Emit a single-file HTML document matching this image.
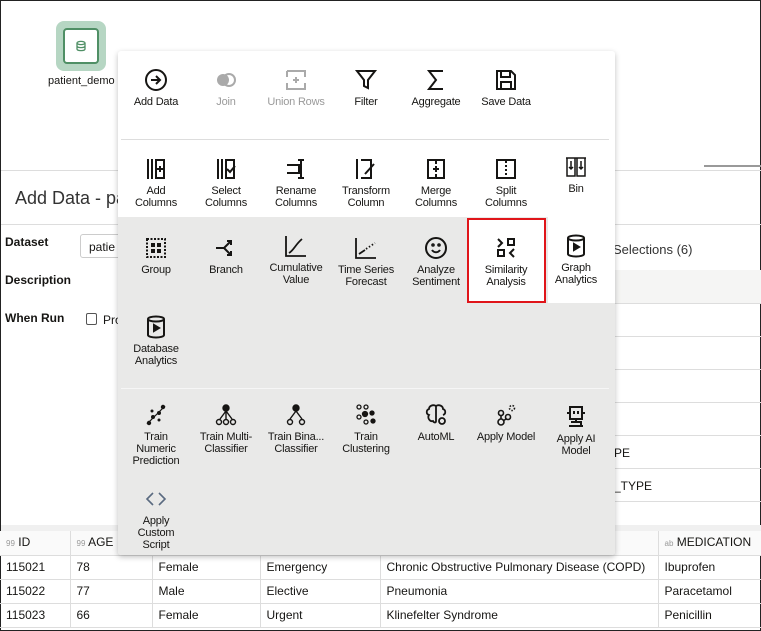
<!DOCTYPE html>
<html><head><meta charset="utf-8"><style>
*{box-sizing:border-box;margin:0;padding:0}
body{width:761px;height:631px;overflow:hidden;background:#fff;font-family:"Liberation Sans",sans-serif;color:#161513;position:relative;border:1px solid #222}
.abs{position:absolute}
.menu{position:absolute;left:117px;top:50px;width:497px;height:504px;background:#fff;box-shadow:0 2px 6px rgba(0,0,0,.25);border-radius:3px;overflow:hidden}
.gray{position:absolute;left:0;top:166px;width:497px;height:338px;background:#e9e9e8}
.it{position:absolute;width:70px;text-align:center;font-size:11px;line-height:12px;color:#161513;letter-spacing:-0.2px}
.it svg{display:block;margin:0 auto 4px;width:24px;height:24px}
.dis{color:#9a9a9a}
.sep{position:absolute;left:3px;width:488px;height:1px;background:#ddd}
table{border-collapse:collapse;table-layout:fixed}
td{border-right:1px solid #ddd;border-bottom:1px solid #ddd;padding:0 0 0 6px;font-size:12px;height:24px;line-height:14px;overflow:hidden;white-space:nowrap}
</style></head><body>
<div class="abs" style="left:55px;top:20px;width:50px;height:50px;background:#b6d6c3;border-radius:8px"><div style="position:absolute;left:7px;top:7px;width:36px;height:36px;border:2px solid #4f8f65;border-radius:4px;background:#fff"></div><svg class="abs" style="left:19px;top:19px" width="12" height="12" viewBox="0 0 12 12" fill="none" stroke="#4f8f65" stroke-width="1.3"><ellipse cx="6" cy="3" rx="4" ry="1.6"/><path d="M2 3v6c0 1 2 1.6 4 1.6s4-.6 4-1.6V3M2 6c0 1 2 1.6 4 1.6s4-.6 4-1.6"/></svg></div>
<div class="abs" style="left:47px;top:74px;font-size:11px">patient_demo</div>
<div class="abs" style="left:703px;top:164px;width:58px;height:2px;background:#999"></div>
<div class="abs" style="left:0;top:169px;width:761px;height:1px;background:#ddd"></div>
<div class="abs" style="left:14px;top:187px;font-size:18px;color:#333">Add Data - pa</div>
<div class="abs" style="left:0;top:223px;width:761px;height:1px;background:#ddd"></div>
<div class="abs" style="left:4px;top:234px;font-size:12px;font-weight:bold">Dataset</div>
<div class="abs" style="left:79px;top:233px;width:50px;height:24px;border:1px solid #ccc;border-radius:3px;font-size:12px;padding:5px 0 0 8px">patie</div>
<div class="abs" style="left:4px;top:272px;font-size:12px;font-weight:bold">Description</div>
<div class="abs" style="left:4px;top:310px;font-size:12px;font-weight:bold">When Run</div>
<div class="abs" style="left:85px;top:312px;width:11px;height:12px;border:1px solid #555;border-radius:2px"></div>
<div class="abs" style="left:102px;top:312px;font-size:12px">Pro</div>
<div class="abs" style="left:612px;top:241px;font-size:13px;color:#333">Selections (6)</div>
<div class="abs" style="left:612px;top:269px;width:149px;height:33px;background:#f5f5f4"></div>
<div class="abs" style="left:612px;top:302px;width:149px;height:1px;background:#ddd"></div>
<div class="abs" style="left:612px;top:335px;width:149px;height:1px;background:#ddd"></div>
<div class="abs" style="left:612px;top:368px;width:149px;height:1px;background:#ddd"></div>
<div class="abs" style="left:612px;top:401px;width:149px;height:1px;background:#ddd"></div>
<div class="abs" style="left:612px;top:434px;width:149px;height:1px;background:#ddd"></div>
<div class="abs" style="left:612px;top:467px;width:149px;height:1px;background:#ddd"></div>
<div class="abs" style="left:612px;top:500px;width:149px;height:1px;background:#ddd"></div>
<div class="abs" style="left:613px;top:445px;font-size:12px">PE</div>
<div class="abs" style="left:613px;top:478px;font-size:12px">_TYPE</div>
<div class="abs" style="left:0;top:524px;width:761px;height:6px;background:#f0f0f0"></div>
<table class="abs" style="left:-1px;top:530px;width:762px">
<colgroup><col style="width:70px"><col style="width:82px"><col style="width:108px"><col style="width:120px"><col style="width:278px"><col></colgroup>
<tr style="background:#fafafa"><td style="height:21px"><span style="font-size:8px;color:#999">99</span> ID</td><td><span style="font-size:8px;color:#999">99</span> AGE</td><td></td><td></td><td></td><td><span style="font-size:8px;color:#999">ab</span> MEDICATION</td></tr>
<tr><td>115021</td><td>78</td><td>Female</td><td>Emergency</td><td>Chronic Obstructive Pulmonary Disease (COPD)</td><td>Ibuprofen</td></tr>
<tr><td>115022</td><td>77</td><td>Male</td><td>Elective</td><td>Pneumonia</td><td>Paracetamol</td></tr>
<tr><td>115023</td><td>66</td><td>Female</td><td>Urgent</td><td>Klinefelter Syndrome</td><td>Penicillin</td></tr>
</table>

<div class="menu">
<div class="gray"></div>
<div class="abs" style="left:430px;top:166px;width:67px;height:86px;background:#fff"></div>
<div class="abs" style="left:349px;top:167px;width:79px;height:85px;background:#fff;border:2px solid #e0151a"></div>
<div class="sep" style="top:88px"></div>
<div class="sep" style="top:337px;background:#f6f6f6"></div>

<div class="it" style="left:3px;top:17px"><svg viewBox="0 0 24 24" fill="none" stroke="#161513" stroke-width="2"><circle cx="12" cy="12" r="10"/><path d="M7 12h9M12 8l4 4-4 4"/></svg>Add Data</div>
<div class="it dis" style="left:73px;top:17px"><svg viewBox="0 0 24 24" fill="#aaa"><circle cx="9" cy="12" r="6"/><circle cx="15" cy="12" r="6" fill="none" stroke="#aaa" stroke-width="2"/></svg>Join</div>
<div class="it dis" style="left:143px;top:17px"><svg viewBox="0 0 24 24" fill="none" stroke="#aaa" stroke-width="2"><path d="M3 3h18v6M3 9V3M3 15v6h18v-6M9 12h6M12 9v6"/></svg>Union Rows</div>
<div class="it" style="left:213px;top:17px"><svg viewBox="0 0 24 24" fill="none" stroke="#161513" stroke-width="2"><path d="M3 3h18l-7 9v8l-4-2v-6z"/></svg>Filter</div>
<div class="it" style="left:283px;top:17px"><svg viewBox="0 0 24 24" fill="none" stroke="#161513" stroke-width="2"><path d="M19 3H5l7 9-7 9h14"/></svg>Aggregate</div>
<div class="it" style="left:353px;top:17px"><svg viewBox="0 0 24 24" fill="none" stroke="#161513" stroke-width="2"><path d="M3 3h14l4 4v14H3zM7 3v6h9V3M7 21v-7h10v7"/></svg>Save Data</div>

<div class="it" style="left:3px;top:106px"><svg viewBox="0 0 24 24" fill="none" stroke="#161513" stroke-width="2"><path d="M4 2v20M8 2v20M12 3h8v18h-8zM16 9v6M13 12h6"/></svg>Add<br>Columns</div>
<div class="it" style="left:73px;top:106px"><svg viewBox="0 0 24 24" fill="none" stroke="#161513" stroke-width="2"><path d="M4 2v20M8 2v20M12 3h8v18h-8zM13 12l3 3 5-6"/></svg>Select<br>Columns</div>
<div class="it" style="left:143px;top:106px"><svg viewBox="0 0 24 24" fill="none" stroke="#161513" stroke-width="2"><path d="M3 8h12v8H3M17 3v18M14 3h6M14 21h6"/></svg>Rename<br>Columns</div>
<div class="it" style="left:213px;top:106px"><svg viewBox="0 0 24 24" fill="none" stroke="#161513" stroke-width="2"><path d="M3 2v20M7 3h10v18H7M11 17l9-10"/></svg>Transform<br>Column</div>
<div class="it" style="left:283px;top:106px"><svg viewBox="0 0 24 24" fill="none" stroke="#161513" stroke-width="2"><path d="M4 3h16v18H4zM12 3v4M12 17v4M12 9v6M9 12h6"/></svg>Merge<br>Columns</div>
<div class="it" style="left:353px;top:106px"><svg viewBox="0 0 24 24" fill="none" stroke="#161513" stroke-width="2"><path d="M3 3h18v18H3z"/><path d="M12 4v16" stroke-dasharray="2 2"/></svg>Split<br>Columns</div>
<div class="it" style="left:423px;top:104px"><svg viewBox="0 0 24 24" fill="none" stroke="#161513" stroke-width="1.5"><path d="M2 3h20M3 3v18h8V3M13 3v18h8V3M7 6v8M5 12l2 2 2-2M17 6v8M15 12l2 2 2-2"/></svg>Bin</div>

<div class="it" style="left:3px;top:185px"><svg viewBox="0 0 24 24" fill="none" stroke="#161513" stroke-width="2"><rect x="3" y="3" width="18" height="18" stroke-dasharray="2 1.5"/><path d="M7 7h4v4H7zM13 7h4v4h-4zM7 13h4v4H7zM13 13h4v4h-4z" fill="#161513" stroke="none"/></svg>Group</div>
<div class="it" style="left:73px;top:185px"><svg viewBox="0 0 24 24" fill="none" stroke="#161513" stroke-width="2"><path d="M2 12h8l6-6M10 12l6 6M13 5h4v4M13 19h4v-4"/></svg>Branch</div>
<div class="it" style="left:143px;top:183px"><svg viewBox="0 0 24 24" fill="none" stroke="#161513" stroke-width="1.8"><path d="M2 2v20h20M5 19c5-3 6-8 13-14"/></svg>Cumulative<br>Value</div>
<div class="it" style="left:213px;top:185px"><svg viewBox="0 0 24 24" fill="none" stroke="#161513" stroke-width="1.8"><path d="M2 2v20h20M5 18l6-4"/><path d="M12 13l9-6" stroke-dasharray="1.5 2"/></svg>Time Series<br>Forecast</div>
<div class="it" style="left:283px;top:185px"><svg viewBox="0 0 24 24" fill="none" stroke="#161513" stroke-width="2"><circle cx="12" cy="12" r="10"/><path d="M8 14c2 3 6 3 8 0"/><circle cx="9" cy="9" r=".8"/><circle cx="15" cy="9" r=".8"/></svg>Analyze<br>Sentiment</div>
<div class="it" style="left:353px;top:185px"><svg viewBox="0 0 24 24" fill="none" stroke="#161513" stroke-width="2"><path d="M4 3l4 4-4 4M14 3h6v6h-6zM4 14h6v6H4zM20 13l-4 4 4 4"/></svg>Similarity<br>Analysis</div>
<div class="it" style="left:423px;top:183px"><svg viewBox="0 0 24 24" fill="none" stroke="#161513" stroke-width="2"><ellipse cx="12" cy="4" rx="8" ry="2.5"/><path d="M4 4v16c0 1.5 4 2.5 8 2.5s8-1 8-2.5V4"/><path d="M10 10l5 3-5 3z" fill="#161513"/></svg>Graph<br>Analytics</div>
<div class="it" style="left:3px;top:264px"><svg viewBox="0 0 24 24" fill="none" stroke="#161513" stroke-width="2"><ellipse cx="12" cy="4" rx="8" ry="2.5"/><path d="M4 4v16c0 1.5 4 2.5 8 2.5s8-1 8-2.5V4"/><path d="M10 10l5 3-5 3z" fill="#161513"/></svg>Database<br>Analytics</div>

<div class="it" style="left:3px;top:352px"><svg viewBox="0 0 24 24" fill="#161513"><circle cx="5" cy="20" r="2.2"/><circle cx="9" cy="14" r="2"/><circle cx="15" cy="10" r="2"/><circle cx="19" cy="4" r="2.2"/><circle cx="8" cy="8" r="1.5"/><circle cx="15" cy="17" r="1.5"/><path d="M3 21L21 3" stroke="#161513" stroke-width="1.2"/></svg>Train<br>Numeric<br>Prediction</div>
<div class="it" style="left:73px;top:352px"><svg viewBox="0 0 24 24" fill="none" stroke="#161513" stroke-width="1.4"><circle cx="12" cy="5" r="3" fill="#161513"/><path d="M12 8v8M12 8l-6 8M12 8l6 8"/><circle cx="5" cy="19" r="2.5"/><circle cx="12" cy="19" r="2.5"/><circle cx="19" cy="19" r="2.5"/></svg>Train Multi-<br>Classifier</div>
<div class="it" style="left:143px;top:352px"><svg viewBox="0 0 24 24" fill="none" stroke="#161513" stroke-width="1.4"><circle cx="12" cy="5" r="3" fill="#161513"/><path d="M12 8l-6 8M12 8l6 8"/><circle cx="6" cy="19" r="2.5"/><circle cx="18" cy="19" r="2.5"/></svg>Train Bina...<br>Classifier</div>
<div class="it" style="left:213px;top:352px"><svg viewBox="0 0 24 24" fill="none" stroke="#161513" stroke-width="1.3"><circle cx="5" cy="4" r="2"/><circle cx="12" cy="4" r="2"/><circle cx="11" cy="11" r="2.5" fill="#161513"/><circle cx="18" cy="10" r="2" fill="#161513"/><circle cx="5" cy="14" r="2"/><circle cx="12" cy="19" r="2"/><circle cx="19" cy="18" r="2" fill="#161513"/></svg>Train<br>Clustering</div>
<div class="it" style="left:283px;top:352px"><svg viewBox="0 0 24 24" fill="none" stroke="#161513" stroke-width="1.8"><path d="M12 3c-3-2-7 0-7 3-3 1-3 5 0 6-2 3 1 7 4 6 1 2 3 2 3 0zM12 3c3-2 7 0 7 3 3 1 3 5 0 6M12 3v15"/><circle cx="18" cy="18" r="3"/></svg>AutoML</div>
<div class="it" style="left:353px;top:352px"><svg viewBox="0 0 24 24" fill="none" stroke="#161513" stroke-width="1.6"><circle cx="7" cy="10" r="2.5"/><circle cx="7" cy="19" r="3"/><circle cx="14" cy="14" r="2.5"/><path d="M7 12v4M9 18l3-2"/><circle cx="18" cy="5" r="2.5" stroke-dasharray="1.5 1.5"/></svg>Apply Model</div>
<div class="it" style="left:423px;top:354px"><svg viewBox="0 0 24 24" fill="none" stroke="#161513" stroke-width="2"><rect x="6" y="2" width="12" height="12"/><path d="M10 6v3M14 6v3M12 14v3M5 21h14M7 17h10v4M3 8h3M18 8h3"/></svg>Apply AI<br>Model</div>
<div class="it" style="left:3px;top:436px"><svg viewBox="0 0 24 24" fill="none" stroke="#5a6a80" stroke-width="1.6"><path d="M9 6l-6 6 6 6M15 6l6 6-6 6"/></svg>Apply<br>Custom<br>Script</div>
</div>
</body></html>
